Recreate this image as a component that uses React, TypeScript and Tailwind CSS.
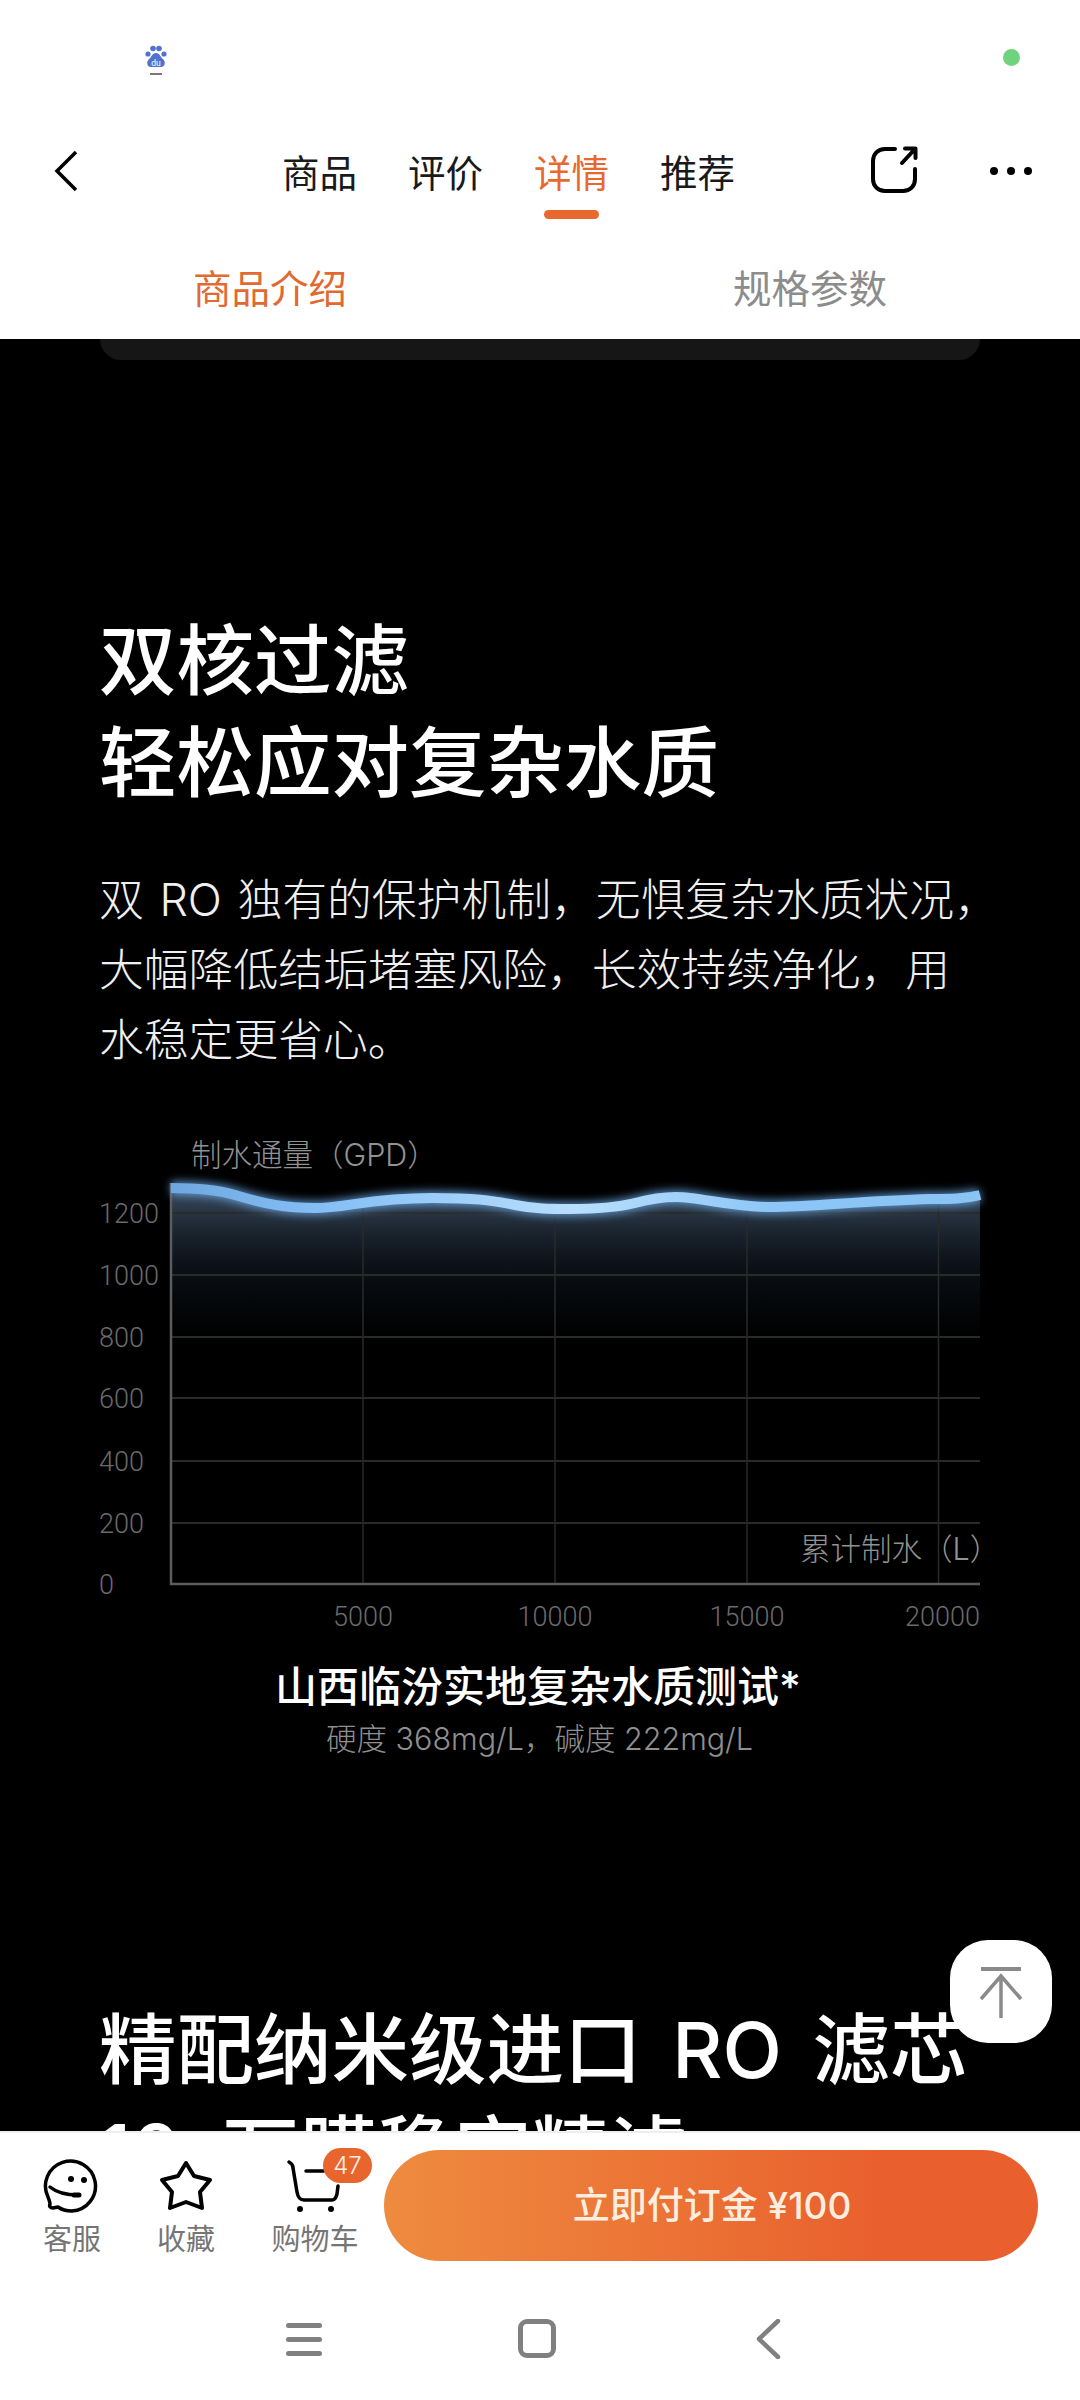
import React from "react";

const curve =
  "M171 1188 C195 1188 215 1189 235 1195 C265 1204 285 1208 315 1208 C345 1208 370 1198 432 1198 C475 1198 490 1200 515 1205 C535 1209 550 1209 570 1209 C595 1209 615 1208 635 1203 C650 1199 660 1197 676 1197 C700 1197 730 1207 770 1207 C810 1207 860 1201 931 1199 C950 1199 965 1199 980 1195";
const area = curve + " L980 1350 L171 1350 Z";

function Chart() {
  const ys = [
    ["1200", 1213],
    ["1000", 1275],
    ["800", 1337],
    ["600", 1398],
    ["400", 1461],
    ["200", 1523],
    ["0", 1584],
  ] as const;
  const xs = [363, 555, 747, 938.5];
  return (
    <svg width="1080" height="510" viewBox="0 1130 1080 510" className="block">
      <defs>
        <linearGradient id="fill" x1="0" y1="1190" x2="0" y2="1345" gradientUnits="userSpaceOnUse">
          <stop offset="0" stopColor="#6f93b8" stopOpacity="0.5" />
          <stop offset="0.45" stopColor="#2d4258" stopOpacity="0.3" />
          <stop offset="1" stopColor="#101c28" stopOpacity="0" />
        </linearGradient>
        <linearGradient id="line" x1="171" y1="0" x2="980" y2="0" gradientUnits="userSpaceOnUse">
          <stop offset="0" stopColor="#6fa8e0" />
          <stop offset="0.2" stopColor="#86c0f5" />
          <stop offset="0.5" stopColor="#b9defc" />
          <stop offset="0.75" stopColor="#8cc6f7" />
          <stop offset="1" stopColor="#8ac4f5" />
        </linearGradient>
        <filter id="glow" x="-5%" y="-300%" width="110%" height="700%">
          <feGaussianBlur stdDeviation="4" />
        </filter>
      </defs>
      <path d={area} fill="url(#fill)" />
      {ys.slice(0, 6).map(([, y]) => (
        <line key={y} x1="171" x2="980" y1={y} y2={y} stroke="#2a2a2a" strokeWidth="2" />
      ))}
      {xs.map((x) => (
        <line key={x} x1={x} x2={x} y1="1205" y2="1584" stroke="#2a2a2a" strokeWidth="1.5" />
      ))}
      <path d="M171 1183 V1584 H980" fill="none" stroke="#5c5c5c" strokeWidth="2.5" />
      <path d={curve} fill="none" stroke="#6aa8e6" strokeWidth="14" filter="url(#glow)" opacity="0.8" />
      <path d={curve} fill="none" stroke="url(#line)" strokeWidth="10" />
      <g fontFamily="Roboto, 'Noto Sans CJK SC', sans-serif" fontWeight="300">
        {ys.map(([t, y]) => (
          <text key={t} x="99" y={y + 10} fontSize="27" fill="#6a6a6a">
            {t}
          </text>
        ))}
        <text x="363" y="1626" fontSize="27" fill="#6a6a6a" textAnchor="middle">5000</text>
        <text x="555" y="1626" fontSize="27" fill="#6a6a6a" textAnchor="middle">10000</text>
        <text x="747" y="1626" fontSize="27" fill="#6a6a6a" textAnchor="middle">15000</text>
        <text x="980" y="1626" fontSize="27" fill="#6a6a6a" textAnchor="end">20000</text>
      </g>
      <g fontFamily="Inter, 'Noto Sans CJK SC', sans-serif" fontWeight="300">
        <text x="191" y="1166" fontSize="30.5" fill="#929292">制水通量（GPD）</text>
        <text x="800" y="1560" fontSize="30.5" fill="#929292">累计制水（L）</text>
      </g>
    </svg>
  );
}

function Paw() {
  return (
    <svg width="22" height="30" viewBox="0 0 22 30">
      <circle cx="3" cy="9" r="2.6" fill="#5272cf" />
      <circle cx="8" cy="3.5" r="2.8" fill="#5272cf" />
      <circle cx="14" cy="3.5" r="2.8" fill="#5272cf" />
      <circle cx="19" cy="9" r="2.6" fill="#5272cf" />
      <path d="M11 8 C15 8 15 12 18 14 C21 17 20 22 16 22 H6 C2 22 1 17 4 14 C7 12 7 8 11 8 Z" fill="#5272cf" />
      <text x="11" y="20.5" fontSize="8.5" fill="#fff" textAnchor="middle" fontFamily="Roboto, sans-serif">du</text>
      <rect x="5" y="28" width="12" height="2" fill="#8a6f7f" />
    </svg>
  );
}

function FooterItem({ label, width, children }: { label: string; width: string; children: React.ReactNode }) {
  return (
    <div className={`flex flex-col items-center ${width}`}>
      <div className="h-[60px] w-[60px]">{children}</div>
      <div className="mt-[4px] text-[29px] leading-[40px] whitespace-nowrap text-[#757575]">{label}</div>
    </div>
  );
}

export default function App() {
  return (
    <div className="relative flex h-[2400px] w-[1080px] flex-col overflow-hidden bg-white font-['Inter','Noto_Sans_CJK_SC',sans-serif]">
      {/* header */}
      <header className="h-[339px] shrink-0 bg-white">
        <div className="flex h-[116px] items-start justify-between pt-[45px] pr-[60px] pl-[145px]">
          <Paw />
          <div className="mt-[4px] h-[17px] w-[17px] rounded-full bg-[#6fd37d]" />
        </div>
        <div className="relative flex h-[110px] items-center pl-[282px]">
          <svg width="30" height="44" viewBox="0 0 30 44" className="absolute top-[33px] left-[51px]" fill="none">
            <path d="M25 3 L6 22 L25 41" stroke="#000" strokeWidth="3.5" />
          </svg>
          <nav className="mt-[6px] flex gap-[51px] text-[37.5px] leading-[50px] text-[#1a1a1a]">
            <span>商品</span>
            <span>评价</span>
            <span className="relative text-[#e8682e]">
              详情
              <span className="absolute top-[61px] left-[10px] h-[9px] w-[55px] rounded-full bg-[#e8682e]" />
            </span>
            <span>推荐</span>
          </nav>
          <svg width="50" height="50" viewBox="0 0 50 50" className="absolute top-[29px] left-[869px]" fill="none" stroke="#000" strokeWidth="4" strokeLinecap="round" strokeLinejoin="round">
            <path d="M26 4 H16 C9 4 4 9 4 16 V34 C4 41 9 46 16 46 H34 C41 46 46 41 46 34 V24" />
            <path d="M33 18 L46 4 M36 3.5 H46.5 V13" />
          </svg>
          <div className="absolute top-[51px] left-[990px] flex gap-[9px]">
            <span className="h-[8px] w-[8px] rounded-full bg-black" />
            <span className="h-[8px] w-[8px] rounded-full bg-black" />
            <span className="h-[8px] w-[8px] rounded-full bg-black" />
          </div>
        </div>
        <div className="flex h-[113px] items-start pt-[37px] text-[38.5px] leading-[52px]">
          <div className="ml-[193px] text-[#e06a32]">商品介绍</div>
          <div className="ml-[386px] text-[#8c8c8c]">规格参数</div>
        </div>
      </header>

      {/* content */}
      <main className="min-h-0 flex-1 overflow-hidden bg-black text-white">
        <div className="mx-[100px] h-[21px] w-[880px] rounded-b-[24px] bg-[#161616]" />
        <h2 className="mt-[250px] ml-[99px] text-[77.5px] leading-[102px] font-medium whitespace-nowrap">
          <div>双核过滤</div>
          <div>轻松应对复杂水质</div>
        </h2>
        <p className="mt-[51px] ml-[99px] text-[44.8px] leading-[70px] font-light whitespace-nowrap text-[#f0f0f0] [word-spacing:3px]">
          <span className="block">双 RO 独有的保护机制，无惧复杂水质状况，</span>
          <span className="block">大幅降低结垢堵塞风险，长效持续净化，用</span>
          <span className="block">水稳定更省心。</span>
        </p>
        <div className="mt-[55px]">
          <Chart />
        </div>
        <div className="mt-[19px] pr-[4px] text-center text-[42px] leading-[56px] font-medium whitespace-nowrap">
          山西临汾实地复杂水质测试*
        </div>
        <div className="-mt-[1px] pr-[1px] text-center text-[30.5px] leading-[50px] font-light whitespace-nowrap text-[#8f8f8f]">
          硬度 368mg/L，碱度 222mg/L
        </div>
        <h2 className="mt-[235px] ml-[99px] text-[77.5px] leading-[102px] font-medium whitespace-nowrap">
          <div className="[word-spacing:10px]">精配纳米级进口 RO 滤芯</div>
          <div className="[word-spacing:20px]">10 万膜稳定精滤</div>
        </h2>
      </main>

      {/* footer */}
      <footer className="h-[269px] shrink-0 border-t-2 border-[#eeeeee] bg-white">
        <div className="flex h-[158px] items-start pt-[17px] pl-[30px]">
          <div className="flex pt-[6px]">
            <FooterItem label="客服" width="w-[84px]">
              <svg viewBox="0 0 60 60" fill="none" stroke="#000" strokeWidth="3.5" strokeLinecap="round" strokeLinejoin="round">
                <path d="M6 41 A25 25 0 1 1 30 55 C25 55 20 54 16 51 L11 52 C8 52 7 50 8 48 C8 46 7 44 6 41 Z" />
                <path d="M8 31 C14 36 24 39 36 39" />
                <path d="M32 39 H37" strokeWidth="5" />
                <circle cx="29" cy="23" r="3" fill="#000" stroke="none" />
                <circle cx="42" cy="24" r="3" fill="#000" stroke="none" />
              </svg>
            </FooterItem>
            <FooterItem label="收藏" width="w-[144px]">
              <svg viewBox="0 0 60 60" fill="none" stroke="#000" strokeWidth="4" strokeLinejoin="round">
                <path d="M30 7 L38 20 L54 24 L44 36 L46 52 L30 46 L14 52 L16 36 L6 24 L22 20 Z" />
              </svg>
            </FooterItem>
            <div className="relative ml-[14px]">
              <FooterItem label="购物车" width="w-[86px]">
                <svg viewBox="0 0 60 60" className="-translate-x-[5px]" fill="none" stroke="#000" strokeWidth="3.5" strokeLinecap="round" strokeLinejoin="round">
                  <path d="M9 6 C11 7 13 9 13 12 L17 36 C18 42 20 44 24 44 H52 C55 44 56 42 57 38 L58 30" />
                  <path d="M26 15 H44" />
                  <circle cx="20" cy="53" r="3" fill="#000" stroke="none" />
                  <circle cx="51" cy="53" r="3" fill="#000" stroke="none" />
                </svg>
              </FooterItem>
              <div className="absolute -top-[8px] left-[51px] flex h-[35px] w-[49px] items-center justify-center rounded-full bg-[#e8662e] text-[24px] leading-none font-light text-[#fdf0e6]">
                47
              </div>
            </div>
          </div>
          <button className="ml-[26px] flex h-[111px] w-[654px] items-center justify-center rounded-full bg-gradient-to-r from-[#ee8b3f] to-[#e9602e] to-75% pl-[2px] text-[37px] font-medium whitespace-nowrap text-[#fdeee0]">
            立即付订金 ¥100
          </button>
        </div>
        <div className="flex h-[109px] items-start pt-[28px] pl-[286px]">
          <div className="mt-[4px] flex h-[33px] w-[36px] flex-col justify-between">
            <span className="h-[5px] rounded-full bg-[#808080]" />
            <span className="h-[5px] rounded-full bg-[#808080]" />
            <span className="h-[5px] rounded-full bg-[#808080]" />
          </div>
          <div className="ml-[196px] h-[39px] w-[38px] rounded-[9px] border-[5px] border-[#808080]" />
          <svg width="26" height="40" viewBox="0 0 26 40" className="ml-[199px]" fill="none">
            <path d="M23 2 L4 20 L23 38" stroke="#808080" strokeWidth="4.5" strokeLinecap="round" strokeLinejoin="round" />
          </svg>
        </div>
      </footer>

      {/* back to top */}
      <div className="absolute top-[1940px] left-[950px] h-[103px] w-[102px] rounded-[38px] bg-white">
        <svg width="102" height="103" viewBox="0 0 102 103" fill="none" stroke="#8a8a8a" strokeWidth="3.5">
          <path d="M31 29 H71" strokeWidth="4" />
          <path d="M51 78 V36 M31 59 L51 36 L71 59" />
        </svg>
      </div>
    </div>
  );
}
